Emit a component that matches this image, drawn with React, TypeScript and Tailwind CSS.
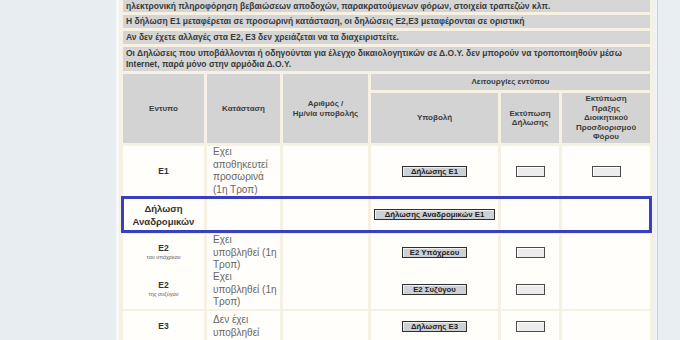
import React from "react";

const COLS = "grid grid-cols-[81px_73px_85px_127px_58px_88px] gap-x-[3px] shrink-0";

function Btn({ children, wide }: { children: React.ReactNode; wide?: boolean }) {
  return (
    <div
      className={
        (wide ? "w-[121px]" : "w-[65px]") +
        " h-[11px] border border-[#2e2e2e] border-l-[1.5px] bg-[#ccd1d6] shadow-[inset_1px_1px_0_#f0f0f0] flex items-center justify-center text-[7.8px] font-bold leading-[9px] text-[#222] whitespace-nowrap"
      }
    >
      {children}
    </div>
  );
}

function PrintBox() {
  return <div className="w-[29px] h-[11px] border border-[#4a4a4a] bg-[#ececec] shadow-[inset_1px_1px_0_#fff]" />;
}

function Info({ children, h }: { children: React.ReactNode; h: string }) {
  return (
    <div className={h + " shrink-0 bg-[#d5d5d5] px-[3px] flex flex-col justify-center text-[8.5px] font-bold leading-[11px] text-[#3a3a3a] whitespace-nowrap overflow-hidden"}>
      {children}
    </div>
  );
}

function HCell({ children, cls }: { children: React.ReactNode; cls?: string }) {
  return (
    <div className={(cls ?? "") + " bg-[#d3d3d3] flex items-center justify-center text-center text-[8px] font-bold leading-[9.5px] text-[#3d3d3d]"}>
      <div>{children}</div>
    </div>
  );
}

function Cell({ children, cls }: { children?: React.ReactNode; cls?: string }) {
  return <div className={(cls ?? "") + " bg-[#fffefa] flex items-center"}>{children}</div>;
}

function Status({ lines }: { lines: string[] }) {
  return (
    <div className="pl-[6px] text-[10px] leading-[12.5px] text-[#666] whitespace-nowrap">
      {lines.map((l, i) => (
        <div key={i}>{l}</div>
      ))}
    </div>
  );
}

export default function App() {
  return (
    <div className="w-[680px] h-[340px] overflow-hidden bg-[#e8eef2] flex font-['Liberation_Sans',Arial,sans-serif]">
      <div className="w-[116px] shrink-0 bg-[#e7edf1]" />
      <div className="w-[3px] shrink-0 bg-[#f5f7f8]" />
      <div className="w-[535px] shrink-0 bg-[#f6f1e2] px-[4px] flex flex-col gap-[3px]">
        <Info h="h-[23px] mt-[-11px]">
          <div>
            <span className="text-[#d23c3c]">Προσοχή:</span> Με την επιλογή «Υποβολή» οι δηλώσεις Ε1, Ε2, Ε3 συμπληρώνονται αυτόματα με την
          </div>
          <div>ηλεκτρονική πληροφόρηση βεβαιώσεων αποδοχών, παρακρατούμενων φόρων, στοιχεία τραπεζών κλπ.</div>
        </Info>
        <Info h="h-[13px]">
          <div>Η δήλωση Ε1 μεταφέρεται σε προσωρινή κατάσταση, οι δηλώσεις Ε2,Ε3 μεταφέρονται σε οριστική</div>
        </Info>
        <Info h="h-[13px]">
          <div>Αν δεν έχετε αλλαγές στα Ε2, Ε3 δεν χρειάζεται να τα διαχειριστείτε.</div>
        </Info>
        <Info h="h-[24px]">
          <div>Οι Δηλώσεις που υποβάλλονται ή οδηγούνται για έλεγχο δικαιολογητικών σε Δ.Ο.Υ. δεν μπορούν να τροποποιηθούν μέσω</div>
          <div>Internet, παρά μόνο στην αρμόδια Δ.Ο.Υ.</div>
        </Info>

        <div className={COLS + " grid-rows-[16px_50px] gap-y-[3px]"}>
          <HCell cls="row-span-2">Εντυπο</HCell>
          <HCell cls="row-span-2">Κατάσταση</HCell>
          <HCell cls="row-span-2">
            Αριθμός /<br />Ημ/νία υποβολής
          </HCell>
          <HCell cls="col-span-3">Λειτουργίες εντύπου</HCell>
          <HCell>Υποβολή</HCell>
          <HCell>
            Εκτύπωση<br />Δήλωσης
          </HCell>
          <HCell>
            Εκτύπωση<br />Πράξης<br />Διοικητικού<br />Προσδιορισμού<br />Φόρου
          </HCell>
        </div>

        {/* E1 */}
        <div className={COLS + " h-[49px]"}>
          <Cell cls="justify-center">
            <span className="text-[8.5px] font-bold text-[#333]">Ε1</span>
          </Cell>
          <Cell>
            <Status lines={["Εχει", "αποθηκευτεί", "προσωρινά", "(1η Τροπ)"]} />
          </Cell>
          <Cell />
          <Cell cls="justify-center">
            <Btn>Δήλωσης Ε1</Btn>
          </Cell>
          <Cell cls="justify-center">
            <PrintBox />
          </Cell>
          <Cell cls="justify-center">
            <PrintBox />
          </Cell>
        </div>

        {/* Αναδρομικών */}
        <div className={COLS + " h-[33px] relative z-10 [outline:3.5px_solid_#3a3fbf] outline-offset-[-1px]"}>
          <Cell cls="justify-center">
            <div className="text-center text-[9.5px] font-bold leading-[13px] text-[#333]">
              Δήλωση
              <br />
              Αναδρομικών
            </div>
          </Cell>
          <Cell />
          <Cell />
          <Cell cls="justify-center">
            <Btn wide>Δήλωσης Αναδρομικών Ε1</Btn>
          </Cell>
          <Cell />
          <Cell />
        </div>

        {/* E2 υπόχρεου */}
        <div className={COLS + " h-[34px]"}>
          <Cell cls="justify-center">
            <div className="text-center leading-[9px]">
              <div className="text-[8.5px] font-bold text-[#333]">Ε2</div>
              <div className="text-[5.5px] text-[#555]">του υπόχρεου</div>
            </div>
          </Cell>
          <Cell>
            <Status lines={["Εχει", "υποβληθεί (1η", "Τροπ)"]} />
          </Cell>
          <Cell />
          <Cell cls="justify-center">
            <Btn>Ε2 Υπόχρεου</Btn>
          </Cell>
          <Cell cls="justify-center">
            <PrintBox />
          </Cell>
          <Cell />
        </div>

        {/* E2 συζύγου */}
        <div className={COLS + " h-[37px]"}>
          <Cell cls="justify-center">
            <div className="text-center leading-[9px]">
              <div className="text-[8.5px] font-bold text-[#333]">Ε2</div>
              <div className="text-[5.5px] text-[#555]">της συζύγου</div>
            </div>
          </Cell>
          <Cell>
            <Status lines={["Εχει", "υποβληθεί (1η", "Τροπ)"]} />
          </Cell>
          <Cell />
          <Cell cls="justify-center">
            <Btn>Ε2 Συζύγου</Btn>
          </Cell>
          <Cell cls="justify-center">
            <PrintBox />
          </Cell>
          <Cell />
        </div>

        {/* E3 */}
        <div className={COLS + " h-[40px] items-start"}>
          <Cell cls="justify-center h-[31px]">
            <span className="text-[8.5px] font-bold text-[#333]">Ε3</span>
          </Cell>
          <Cell cls="h-[31px]">
            <Status lines={["Δεν έχει", "υποβληθεί"]} />
          </Cell>
          <Cell cls="h-[31px]" />
          <Cell cls="justify-center h-[31px]">
            <Btn>Δήλωσης Ε3</Btn>
          </Cell>
          <Cell cls="justify-center h-[31px]">
            <PrintBox />
          </Cell>
          <Cell cls="h-[31px]" />
        </div>
      </div>
      <div className="w-[3px] shrink-0 bg-[#eef2f4]" />
      <div className="w-[1px] shrink-0 bg-[#c9d4dc]" />
      <div className="flex-1 bg-[#e8eef2]" />
    </div>
  );
}
